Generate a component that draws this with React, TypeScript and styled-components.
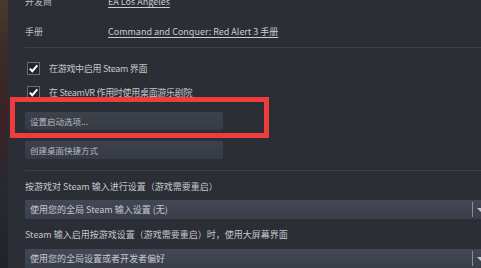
import React from 'react'
import styled, { createGlobalStyle } from 'styled-components'

const GlobalStyle = createGlobalStyle`
  html, body {
    margin: 0;
    padding: 0;
    background: #2b2e35;
    overflow: hidden;
  }
  body {
    font-family: 'Noto Sans CJK SC', 'Liberation Sans', sans-serif;
    color: #c6c9cf;
  }
`

const Page = styled.div`
  display: flex;
  width: 481px;
  height: 268px;
  overflow: hidden;
  position: relative;
  background: #2b2e35;
`

const ArtStrip = styled.div`
  width: 8px;
  flex-shrink: 0;
  background: linear-gradient(
    180deg,
    #4a3a2c 0%,
    #3a2b28 20%,
    #3a2226 45%,
    #252a33 70%,
    #1f242c 100%
  );
`

const Content = styled.div`
  flex: 1;
  display: flex;
  flex-direction: column;
  padding-left: 17px;
  margin-top: -13px;
`

const InfoRow = styled.div`
  display: flex;
  align-items: center;
  height: 30px;
  font-size: 9px;
`

const InfoLabel = styled.div`
  width: 83px;
  color: #b9bcc2;
`

const InfoLink = styled.span`
  color: #c9ccd2;
  font-size: 9px;
  text-decoration: underline;
  text-underline-offset: 2px;
`

const Divider = styled.div<{ $top: number; $bottom: number }>`
  height: 1px;
  flex-shrink: 0;
  background: #3d4049;
  margin: ${({ $top, $bottom }) => `${$top}px 0 ${$bottom}px`};
`

const Spacer = styled.div<{ $h: number }>`
  height: ${({ $h }) => $h}px;
  flex-shrink: 0;
`

const CheckRow = styled.div`
  display: flex;
  align-items: center;
  gap: 9px;
  height: 24px;
  padding-left: 2px;
  font-size: 9px;
  letter-spacing: -0.3px;
  color: #c4c7cd;
`

const Box = styled.div`
  width: 11px;
  height: 11px;
  border: 1px solid #6a6e77;
  background: #22252b;
  display: flex;
  align-items: center;
  justify-content: center;
`

const ActionButton = styled.div`
  width: 198px;
  height: 18px;
  flex-shrink: 0;
  box-sizing: border-box;
  padding-left: 5px;
  display: flex;
  align-items: center;
  font-size: 8.5px;
  color: #b8bbc1;
  background: linear-gradient(180deg, #3d414a 0%, #373b44 100%);
  border-radius: 1px;
`

const FieldLabel = styled.div`
  font-size: 9px;
  color: #c4c7cd;
  height: 16px;
  flex-shrink: 0;
  display: flex;
  align-items: center;
`

const Dropdown = styled.div`
  height: 19px;
  flex-shrink: 0;
  box-sizing: border-box;
  display: flex;
  align-items: center;
  padding-left: 5px;
  font-size: 9px;
  color: #c6c9cf;
  background: linear-gradient(180deg, #434855 0%, #3a3e49 100%);
  position: relative;
`

const DropDivider = styled.div`
  position: absolute;
  left: 447px;
  top: 2px;
  bottom: 2px;
  width: 1px;
  background: #8a8e97;
`

const DropArrow = styled.div`
  position: absolute;
  left: 452px;
  top: 8px;
  width: 0;
  height: 0;
  border-left: 4px solid transparent;
  border-right: 4px solid transparent;
  border-top: 4px solid #c2c5cb;
`

const Highlight = styled.div`
  position: absolute;
  left: 10px;
  top: 97px;
  width: 259px;
  height: 41px;
  box-sizing: border-box;
  border: 5px solid #f03c3c;
  pointer-events: none;
`

const Check = () => (
  <svg width="11" height="11" viewBox="0 0 11 11">
    <path d="M1.8 5.6 L4.3 8.2 L9.3 2.3" fill="none" stroke="#ffffff" strokeWidth="2" />
  </svg>
)

export default function App() {
  return (
    <>
      <GlobalStyle />
      <Page>
        <ArtStrip />
        <Content>
          <InfoRow>
            <InfoLabel>开发商</InfoLabel>
            <InfoLink>EA Los Angeles</InfoLink>
          </InfoRow>
          <InfoRow>
            <InfoLabel>手册</InfoLabel>
            <InfoLink>Command and Conquer: Red Alert 3 手册</InfoLink>
          </InfoRow>
          <Divider $top={1} $bottom={8} />
          <CheckRow>
            <Box>
              <Check />
            </Box>
            在游戏中启用 Steam 界面
          </CheckRow>
          <CheckRow>
            <Box>
              <Check />
            </Box>
            在 SteamVR 作用时使用桌面游乐剧院
          </CheckRow>
          <Spacer $h={8} />
          <ActionButton>设置启动选项...</ActionButton>
          <Spacer $h={11} />
          <ActionButton>创建桌面快捷方式</ActionButton>
          <Divider $top={11} $bottom={7} />
          <FieldLabel>按游戏对 Steam 输入进行设置（游戏需要重启）</FieldLabel>
          <Spacer $h={6} />
          <Dropdown>
            使用您的全局 Steam 输入设置 (无)
            <DropDivider />
            <DropArrow />
          </Dropdown>
          <Spacer $h={7} />
          <FieldLabel>Steam 输入启用按游戏设置（游戏需要重启）时，使用大屏幕界面</FieldLabel>
          <Spacer $h={7} />
          <Dropdown>
            使用您的全局设置或者开发者偏好
            <DropDivider />
            <DropArrow />
          </Dropdown>
        </Content>
        <Highlight />
      </Page>
    </>
  )
}
